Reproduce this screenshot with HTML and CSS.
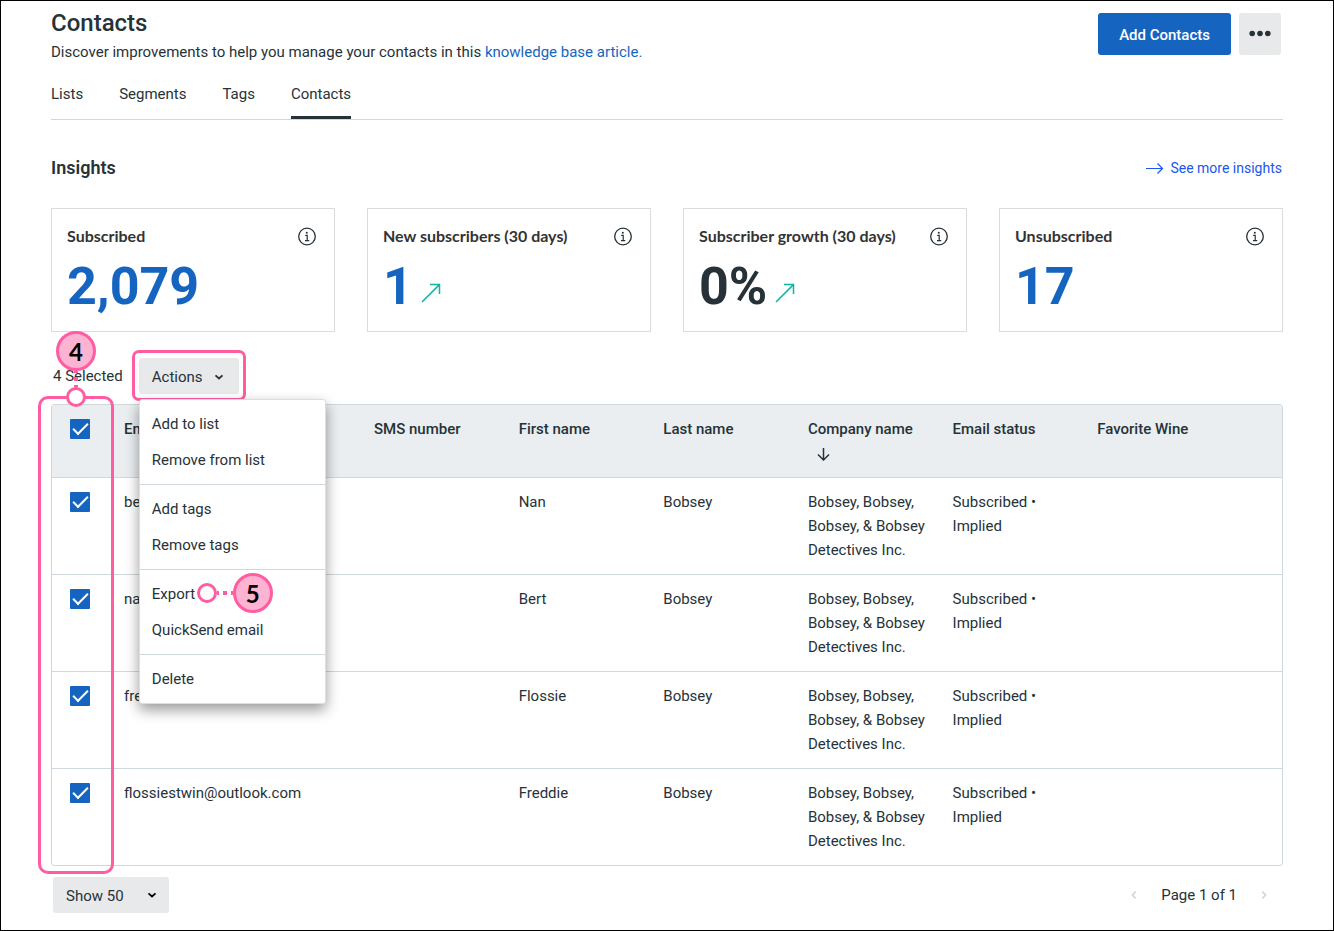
FILE: index.html
```html
<!DOCTYPE html>
<html lang="en">
<head>
  <meta charset="UTF-8" />
  <meta name="viewport" content="width=device-width, initial-scale=1.0" />
  <title>Contacts</title>
  <link rel="stylesheet" href="styles.css">
</head>
<body>
  <svg class="sprite" aria-hidden="true">
    <symbol id="info" viewBox="0 0 20 20">
      <circle cx="10" cy="10.5" r="8.3" fill="none" stroke="currentColor" stroke-width="1.3" />
      <circle cx="9.8" cy="6.8" r="1" fill="currentColor" />
      <path d="M8.2 9.3h2v5.2M8 14.6h4.2" fill="none" stroke="currentColor" stroke-width="1.2" />
    </symbol>
    <symbol id="trend" viewBox="0 0 20 20">
      <path d="M1 19L18.4 1.6M9 1.5h9.5V11" fill="none" stroke="currentColor" stroke-width="1.5" />
    </symbol>
    <symbol id="chevron" viewBox="0 0 10 10">
      <path d="M1.5 3.3L5 6.5 8.5 3.3" fill="none" stroke="currentColor" stroke-width="1.8" />
    </symbol>
  </svg>

  <header class="header">
    <div>
      <h1>Contacts</h1>
      <p class="intro">Discover improvements to help you manage your contacts in this <a href="#">knowledge base article.</a></p>
    </div>
    <div class="header-buttons">
      <button class="btn-primary">Add Contacts</button>
      <button class="btn-more" aria-label="More options">
        <svg width="24" height="8" viewBox="0 0 24 8" fill="currentColor"><circle cx="4.2" cy="3.5" r="2.8" /><circle cx="12" cy="3.5" r="2.8" /><circle cx="19.8" cy="3.5" r="2.8" /></svg>
      </button>
    </div>
  </header>

  <nav class="tabs">
    <a href="#">Lists</a>
    <a href="#">Segments</a>
    <a href="#">Tags</a>
    <a href="#" class="active">Contacts</a>
  </nav>

  <section>
    <div class="insights-head">
      <h2>Insights</h2>
      <a href="#">
        <svg width="18" height="12" viewBox="0 0 18 12" fill="none" stroke="currentColor" stroke-width="1.2"><path d="M0 6.5h16.500M11.500 1.500l5 5-5 5" /></svg>
        See more insights
      </a>
    </div>
    <div class="cards">
      <div class="card">
        <div class="card-label">Subscribed <svg class="info"><use href="#info" /></svg></div>
        <div class="card-value">2,079</div>
      </div>
      <div class="card">
        <div class="card-label">New subscribers (30 days) <svg class="info"><use href="#info" /></svg></div>
        <div class="card-value">1 <svg class="trend"><use href="#trend" /></svg></div>
      </div>
      <div class="card">
        <div class="card-label">Subscriber growth (30 days) <svg class="info"><use href="#info" /></svg></div>
        <div class="card-value dark">0% <svg class="trend"><use href="#trend" /></svg></div>
      </div>
      <div class="card">
        <div class="card-label">Unsubscribed <svg class="info"><use href="#info" /></svg></div>
        <div class="card-value">17</div>
      </div>
    </div>
  </section>

  <div class="toolbar">
    <span class="selected">4 Selected</span>
    <div class="actions">
      <button class="btn-actions">Actions <svg class="chevron"><use href="#chevron" /></svg></button>
      <div class="menu">
        <div class="menu-group">
          <button>Add to list</button>
          <button>Remove from list</button>
        </div>
        <div class="menu-group">
          <button>Add tags</button>
          <button>Remove tags</button>
        </div>
        <div class="menu-group">
          <button>Export</button>
          <button>QuickSend email</button>
          <div class="callout callout-5"><i class="ring"></i><i class="dots"></i><b class="badge">5</b></div>
        </div>
        <div class="menu-group">
          <button>Delete</button>
        </div>
      </div>
    </div>
  </div>

  <div class="table-wrap">
    <table>
      <colgroup>
        <col class="col-check"><col class="col-email"><col class="col"><col class="col"><col class="col"><col class="col"><col class="col"><col>
      </colgroup>
      <thead>
        <tr>
          <th class="check"><input type="checkbox" aria-label="Select all" checked></th>
          <th>Email</th>
          <th>SMS number</th>
          <th>First name</th>
          <th>Last name</th>
          <th>Company name <svg class="sort" viewBox="0 0 14 14" fill="none" stroke="currentColor" stroke-width="1.5"><path d="M7.5 1v12M2 7.5L7.5 13 13 7.5" /></svg></th>
          <th>Email status</th>
          <th>Favorite Wine</th>
        </tr>
      </thead>
      <tbody>
        <tr>
          <td class="check"><input type="checkbox" aria-label="Select Nan Bobsey" checked></td>
          <td>bertstwin@outlook.com</td>
          <td></td>
          <td>Nan</td>
          <td>Bobsey</td>
          <td>Bobsey, Bobsey, Bobsey, &amp; Bobsey Detectives Inc.</td>
          <td>Subscribed • Implied</td>
          <td></td>
        </tr>
        <tr>
          <td class="check"><input type="checkbox" aria-label="Select Bert Bobsey" checked></td>
          <td>nanstwin@outlook.com</td>
          <td></td>
          <td>Bert</td>
          <td>Bobsey</td>
          <td>Bobsey, Bobsey, Bobsey, &amp; Bobsey Detectives Inc.</td>
          <td>Subscribed • Implied</td>
          <td></td>
        </tr>
        <tr>
          <td class="check"><input type="checkbox" aria-label="Select Flossie Bobsey" checked></td>
          <td>freddiestwin@outlook.com</td>
          <td></td>
          <td>Flossie</td>
          <td>Bobsey</td>
          <td>Bobsey, Bobsey, Bobsey, &amp; Bobsey Detectives Inc.</td>
          <td>Subscribed • Implied</td>
          <td></td>
        </tr>
        <tr>
          <td class="check"><input type="checkbox" aria-label="Select Freddie Bobsey" checked></td>
          <td>flossiestwin@outlook.com</td>
          <td></td>
          <td>Freddie</td>
          <td>Bobsey</td>
          <td>Bobsey, Bobsey, Bobsey, &amp; Bobsey Detectives Inc.</td>
          <td>Subscribed • Implied</td>
          <td></td>
        </tr>
      </tbody>
    </table>
    <div class="highlight"></div>
    <div class="callout callout-4"><b class="badge">4</b><i class="dots"></i><i class="ring"></i></div>
  </div>

  <footer class="footer">
    <label class="page-size">
      <select aria-label="Rows per page">
        <option>Show 50</option>
        <option>Show 100</option>
      </select>
      <svg class="chevron"><use href="#chevron" /></svg>
    </label>
    <div class="pager">
      <button aria-label="Previous page" disabled><svg class="chevron prev"><use href="#chevron" /></svg></button>
      <span>Page 1 of 1</span>
      <button aria-label="Next page" disabled><svg class="chevron next"><use href="#chevron" /></svg></button>
    </div>
  </footer>
</body>
</html>
```
FILE: styles.css
```css
* { box-sizing: border-box; }
body {
  margin: 0;
  min-height: 100vh;
  padding: 8px 50px 16px;
  border: 1px solid #000;
  background: #fff;
  color: #263238;
  font-family: Roboto, sans-serif;
  font-size: 15px;
  line-height: 24px;
}
h1, h2, p { margin: 0; }
a { color: #1565c0; text-decoration: none; }
button, select {
  border: none;
  font: inherit;
  color: inherit;
  cursor: pointer;
}
.sprite {
  position: absolute;
  width: 0;
  height: 0;
}

/* header */
.header {
  display: flex;
  justify-content: space-between;
}
h1 {
  font-size: 24px;
  font-weight: 500;
  line-height: 28px;
  margin-bottom: 3px;
}
.header-buttons {
  display: flex;
  gap: 8px;
  padding: 4px 2px 0 0;
}
.btn-primary {
  height: 42px;
  padding: 2px 21px 0;
  border-radius: 3px;
  background: #1565c0;
  color: #fff;
  font-weight: 500;
}
.btn-more {
  display: flex;
  align-items: center;
  justify-content: center;
  width: 42px;
  height: 42px;
  padding: 0;
  border-radius: 3px;
  background: #e8e9ea;
}
.tabs {
  display: flex;
  gap: 36px;
  margin-top: 18px;
  border-bottom: 1px solid #cfd8dc;
}
.tabs a {
  padding-bottom: 10px;
  border-bottom: 3px solid transparent;
  color: #263238;
}
.tabs .active { border-color: #263238; }

/* insights */
.insights-head {
  display: flex;
  align-items: center;
  justify-content: space-between;
  margin: 36px 0 28px;
}
h2 {
  font-size: 18px;
  font-weight: 600;
  line-height: 24px;
}
.insights-head a {
  display: flex;
  align-items: center;
  gap: 6px;
  padding-right: 1px;
  color: #1a56f0;
  font-size: 14px;
}
.cards {
  display: grid;
  grid-template-columns: repeat(4, 1fr);
  gap: 32px;
}
.card {
  padding: 15px 15px 14px;
  border: 1px solid #dcdcdc;
}
.card-label {
  display: flex;
  align-items: center;
  justify-content: space-between;
  color: #333;
  font-family: Lato, sans-serif;
  font-size: 16px;
  font-weight: 700;
}
.info {
  width: 20px;
  height: 20px;
  margin-right: 2px;
  color: #263238;
}
.card-value {
  display: flex;
  align-items: flex-end;
  gap: 8px;
  margin-top: 9px;
  color: #1565c0;
  font-size: 52px;
  font-weight: 700;
  line-height: 60px;
}
.dark { color: #263238; }
.trend {
  width: 20px;
  height: 20px;
  margin-bottom: 14px;
  color: #12b3a2;
}

/* toolbar */
.toolbar {
  display: flex;
  align-items: center;
  gap: 16px;
  margin-top: 26px;
  padding-left: 2px;
}
.actions {
  position: relative;
  z-index: 2;
}
.actions::before {
  content: "";
  position: absolute;
  inset: -8px -7px -7px;
  border: 3px solid #ff5ca2;
  border-radius: 7px;
}
.btn-actions {
  position: relative;
  display: flex;
  align-items: center;
  gap: 11px;
  width: 100px;
  height: 36px;
  padding: 2px 13px 0;
  border-radius: 3px;
  background: #e8e9ea;
}
.chevron {
  width: 10px;
  height: 10px;
}
.menu {
  position: absolute;
  top: 41px;
  left: 0;
  width: 187px;
  border: 1px solid #dcdfe1;
  border-radius: 3px;
  background: #fff;
  box-shadow: 0 6px 14px rgba(0,0,0,0.4);
}
.menu-group {
  position: relative;
  padding: 6px 0;
}
.menu-group + .menu-group { border-top: 1px solid #cfd8dc; }
.menu button {
  display: block;
  width: 100%;
  height: 36px;
  padding: 0 12px;
  background: none;
  text-align: left;
}

/* table */
.table-wrap {
  position: relative;
  margin-top: 10px;
  border: 1px solid #cfd8dc;
  border-radius: 3px;
}
table {
  width: 100%;
  table-layout: fixed;
  border-spacing: 0;
}
.col-check { width: 56px; }
.col-email { width: 250px; }
.col { width: 11.76%; }
th, td {
  padding: 12px 10px 12px 16px;
  text-align: left;
  vertical-align: top;
}
th {
  height: 72px;
  background: #eaeef1;
  font-weight: 500;
}
td {
  border-top: 1px solid #cfd8dc;
}
.check { padding: 14px 0 0 18px; }
input {
  appearance: none;
  display: grid;
  place-items: center;
  width: 20px;
  height: 20px;
  margin: 0;
  padding: 0 0 4px 1px;
  border-radius: 1px;
  background: #1565c0;
}
input:checked::before {
  content: "";
  width: 13px;
  height: 6px;
  border: solid #fff;
  border-width: 0 0 2px 2px;
  transform: rotate(-45deg);
}
.sort {
  display: block;
  width: 14px;
  height: 14px;
  margin: 6px 0 0 8px;
}

/* callouts */
.highlight {
  position: absolute;
  inset: -9px auto -9px -14px;
  width: 76px;
  border: 3px solid #ff5ca2;
  border-radius: 10px;
}
.callout {
  position: absolute;
  display: flex;
  align-items: center;
}
.callout-4 {
  top: -74px;
  left: 4px;
  flex-direction: column;
}
.callout-5 {
  top: 3px;
  left: 57px;
}
.badge {
  width: 40px;
  height: 40px;
  border: 3px solid #ff5ca2;
  border-radius: 50%;
  background: #ffb3d2;
  color: #000;
  font-family: Lato, sans-serif;
  font-size: 24px;
  line-height: 35px;
  text-align: center;
}
.ring {
  width: 20px;
  height: 20px;
  border: 3px solid #ff5ca2;
  border-radius: 50%;
  background: #fff;
}
.callout-4 .dots {
  width: 4px;
  height: 16px;
  background: repeating-linear-gradient(#ff5ca2 0 2px, transparent 2px 6px, #ff5ca2 6px 8px);
}
.callout-5 .dots {
  width: 16px;
  height: 4px;
  background: repeating-linear-gradient(90deg, #ff5ca2 0 2px, transparent 2px 6px, #ff5ca2 6px 8px);
}

/* footer */
.footer {
  display: flex;
  align-items: center;
  justify-content: space-between;
  margin-top: 11px;
  padding: 0 14px 0 2px;
}
.page-size {
  position: relative;
  color: #000;
}
select {
  appearance: none;
  display: block;
  width: 116px;
  height: 36px;
  padding: 2px 13px 0;
  border-radius: 3px;
  background: #e8e9ea;
  color: #263238;
}
.page-size .chevron {
  position: absolute;
  top: 13px;
  right: 12px;
  pointer-events: none;
}
.pager {
  display: flex;
  align-items: center;
  gap: 22px;
}
.pager button {
  display: flex;
  padding: 0;
  background: none;
  color: #cfd8dc;
}
.prev { transform: rotate(90deg); }
.next { transform: rotate(-90deg); }
```
